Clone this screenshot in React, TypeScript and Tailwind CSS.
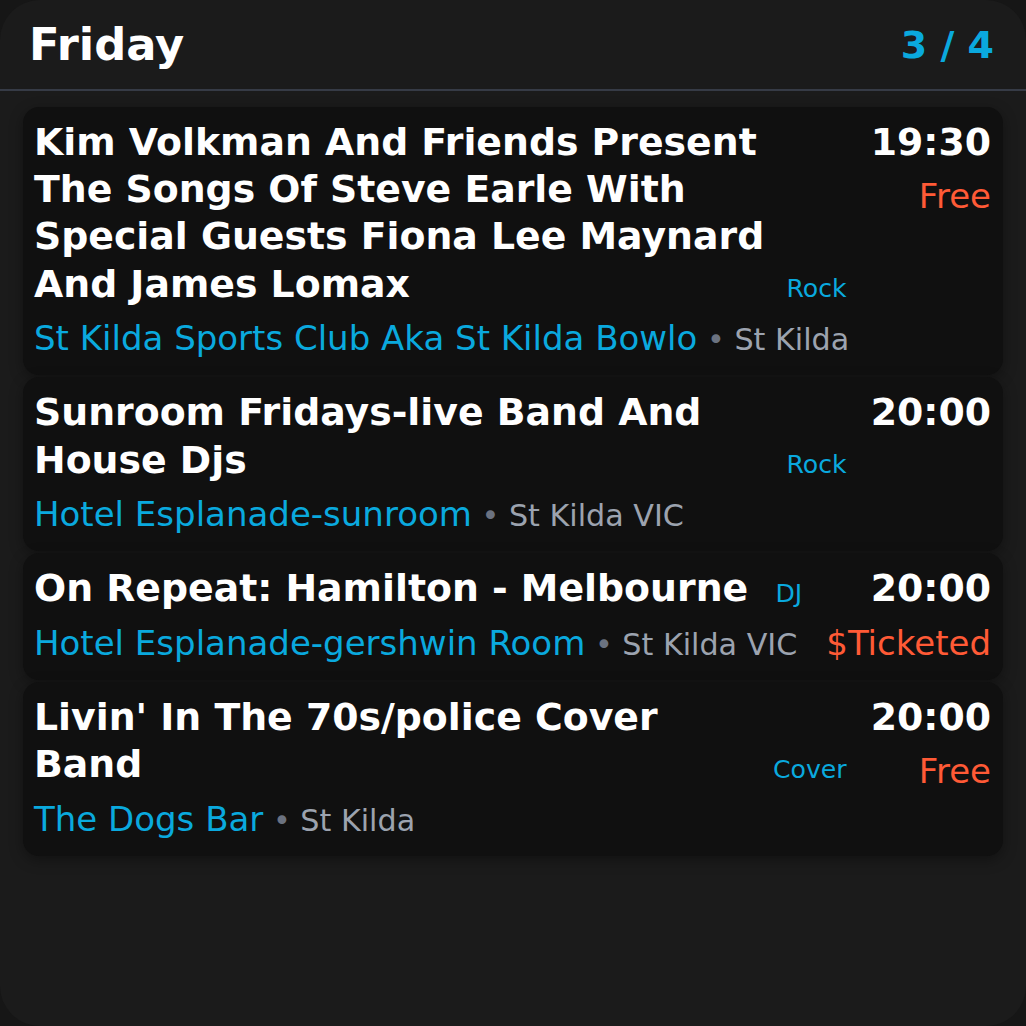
import React from "react";

type Ev = {
  title: string;
  genre: string;
  venue: string;
  loc: string;
  time: string;
  price?: string;
};

const events: Ev[] = [
  {
    title: "Kim Volkman And Friends Present The Songs Of Steve Earle With Special Guests Fiona Lee Maynard And James Lomax",
    genre: "Rock",
    venue: "St Kilda Sports Club Aka St Kilda Bowlo",
    loc: "St Kilda",
    time: "19:30",
    price: "Free",
  },
  {
    title: "Sunroom Fridays-live Band And House Djs",
    genre: "Rock",
    venue: "Hotel Esplanade-sunroom",
    loc: "St Kilda VIC",
    time: "20:00",
  },
  {
    title: "On Repeat: Hamilton - Melbourne",
    genre: "DJ",
    venue: "Hotel Esplanade-gershwin Room",
    loc: "St Kilda VIC",
    time: "20:00",
    price: "$Ticketed",
  },
  {
    title: "Livin' In The 70s/police Cover Band",
    genre: "Cover",
    venue: "The Dogs Bar",
    loc: "St Kilda",
    time: "20:00",
    price: "Free",
  },
];

export default function App() {
  return (
    <div
      className="w-[1026px] h-[1026px] bg-[#161616] overflow-hidden"
      style={{ fontFamily: "'DejaVu Sans', sans-serif" }}
    >
      <div className="w-full h-full bg-[#1b1b1b] rounded-[40px] flex flex-col">
        <div className="flex items-center justify-between h-[91px] pl-[29px] pr-[32px] border-b-2 border-[#363b46]">
          <div className="text-[44.8px] font-bold text-white leading-none pt-[2px]">Friday</div>
          <div className="text-[38px] font-bold text-[#0aa9de] leading-none">3 / 4</div>
        </div>
        <div className="flex flex-col gap-[2px] px-[23px] pt-[16px]">
          {events.map((e, i) => (
            <div
              key={i}
              className="bg-[#101010] rounded-[16px] pt-3 pl-[11px] pr-3 pb-[16px] flex gap-6 shadow-[0_4px_14px_rgba(0,0,0,0.35)]"
            >
              <div className="flex-1 min-w-0 flex flex-col">
                <div className="flex items-end gap-4">
                  <div className="flex-1 text-[37.8px] font-bold text-white leading-[1.25]">
                    {e.title}
                  </div>
                  <div className="shrink-0 text-[25.2px] text-[#0aa9de] leading-[38px]">{e.genre}</div>
                </div>
                <div className="mt-[9px] text-[34px] leading-[1.25] whitespace-nowrap">
                  <span className="text-[#0aa9de]">{e.venue}</span>
                  <span className="text-[30.2px] text-[#9ca3af]">
                    {" "}
                    <span className="text-[#6b7280]">•</span> {e.loc}
                  </span>
                </div>
              </div>
              <div className="shrink-0 flex flex-col items-end">
                <div className="text-[37.8px] font-bold text-white leading-[1.25]">{e.time}</div>
                {e.price && (
                  <div className="text-[34px] text-[#ff5a36] leading-[1.25] mt-[9px]">{e.price}</div>
                )}
              </div>
            </div>
          ))}
        </div>
      </div>
    </div>
  );
}
